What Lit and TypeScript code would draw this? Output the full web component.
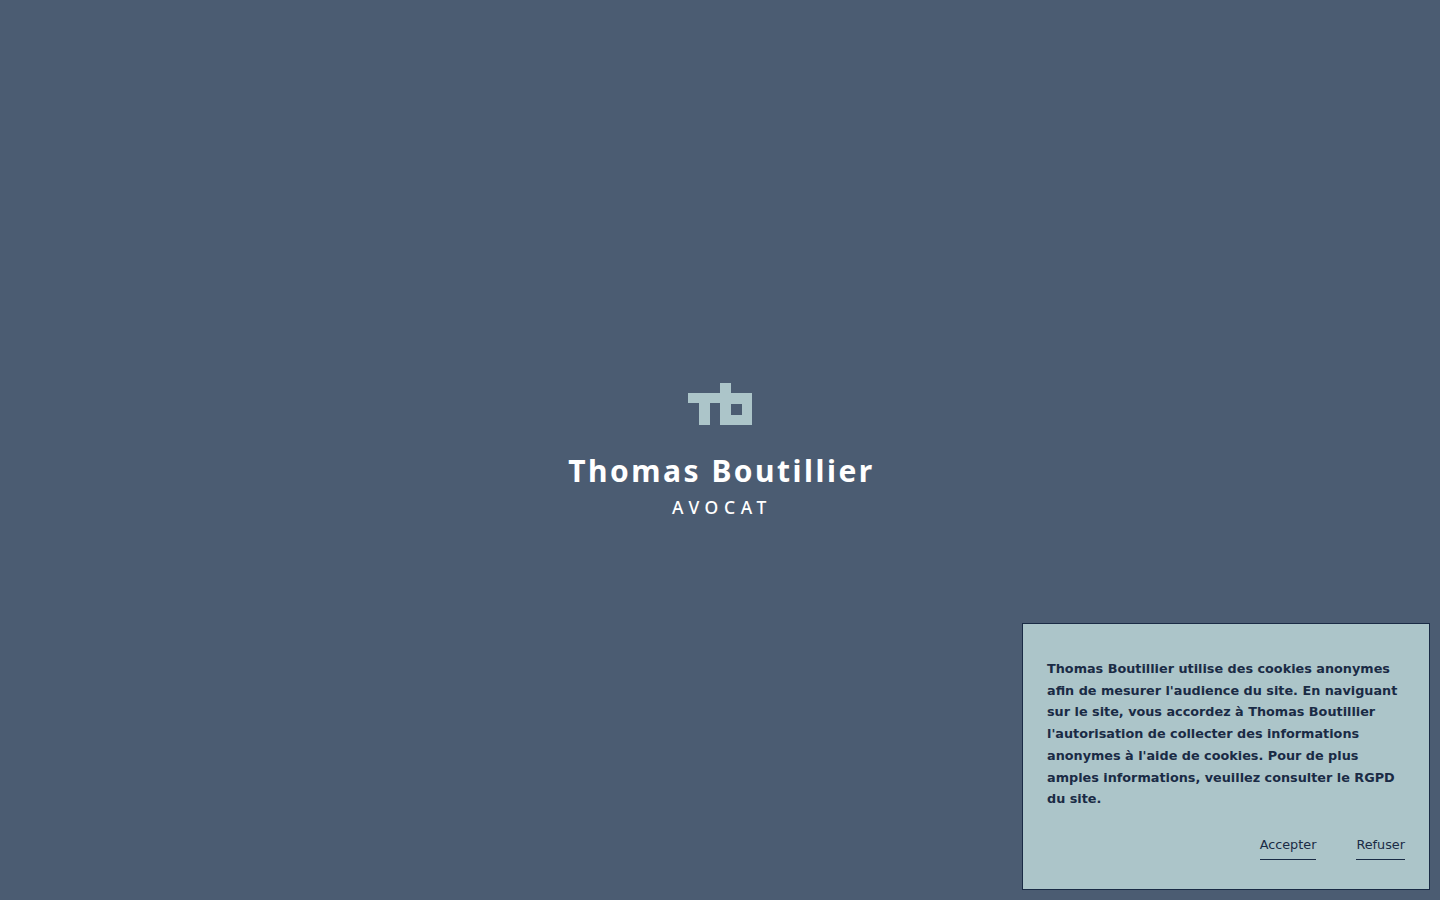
import { LitElement, html, css } from "lit";
import { customElement } from "lit/decorators.js";

@customElement("app-root")
export class AppRoot extends LitElement {
  static styles = css`
    :host {
      display: block;
      height: 100vh;
      background: #4b5c72;
      overflow: hidden;
    }
    .stage {
      height: 100%;
      display: flex;
      flex-direction: column;
      align-items: center;
      padding-top: 383px;
      box-sizing: border-box;
    }
    .logo {
      display: block;
      width: 64px;
      height: 42px;
    }
    .name {
      margin-top: 26px;
      padding-left: 3px;
      font: 700 30px/40px "Noto Sans", sans-serif;
      letter-spacing: 2.5px;
      color: #fff;
      white-space: nowrap;
    }
    .role {
      margin-top: 4px;
      padding-left: 4px;
      font: 500 17.5px/24px "Noto Sans", sans-serif;
      letter-spacing: 5.6px;
      color: #fff;
    }
    .cookie {
      position: fixed;
      right: 10px;
      bottom: 10px;
      width: 408px;
      height: 267px;
      box-sizing: border-box;
      padding: 34px 24px 0;
      background: #acc5c9;
      border: 1px solid #1a2b45;
      color: #1a2b45;
      font-family: "DejaVu Sans", sans-serif;
    }
    .cookie p {
      margin: 0;
      font-size: 12.8px;
      font-weight: 700;
      line-height: 21.7px;
    }
    .actions {
      display: flex;
      justify-content: flex-end;
      gap: 40px;
      margin-top: 27.5px;
    }
    .actions a {
      font-size: 12.8px;
      line-height: 16px;
      padding-bottom: 6px;
      border-bottom: 1px solid #1a2b45;
      color: #1a2b45;
    }
  `;

  render() {
    return html`
      <div class="stage">
        <svg class="logo" viewBox="0 0 64 42" aria-label="Logo">
          <path
            fill="#acc5c9"
            fill-rule="evenodd"
            d="M0 10H32V0H43V10H64V42H32V20H22V42H11V20H0ZM43 21V32H54V21Z"
          />
        </svg>
        <div class="name">Thomas Boutillier</div>
        <div class="role">AVOCAT</div>
      </div>
      <aside class="cookie">
        <p>
          Thomas Boutillier utilise des cookies anonymes afin de mesurer
          l'audience du site. En naviguant sur le site, vous accordez à Thomas
          Boutillier l'autorisation de collecter des informations anonymes à
          l'aide de cookies. Pour de plus amples informations, veuillez
          consulter le RGPD du site.
        </p>
        <div class="actions">
          <a>Accepter</a>
          <a>Refuser</a>
        </div>
      </aside>
    `;
  }
}
